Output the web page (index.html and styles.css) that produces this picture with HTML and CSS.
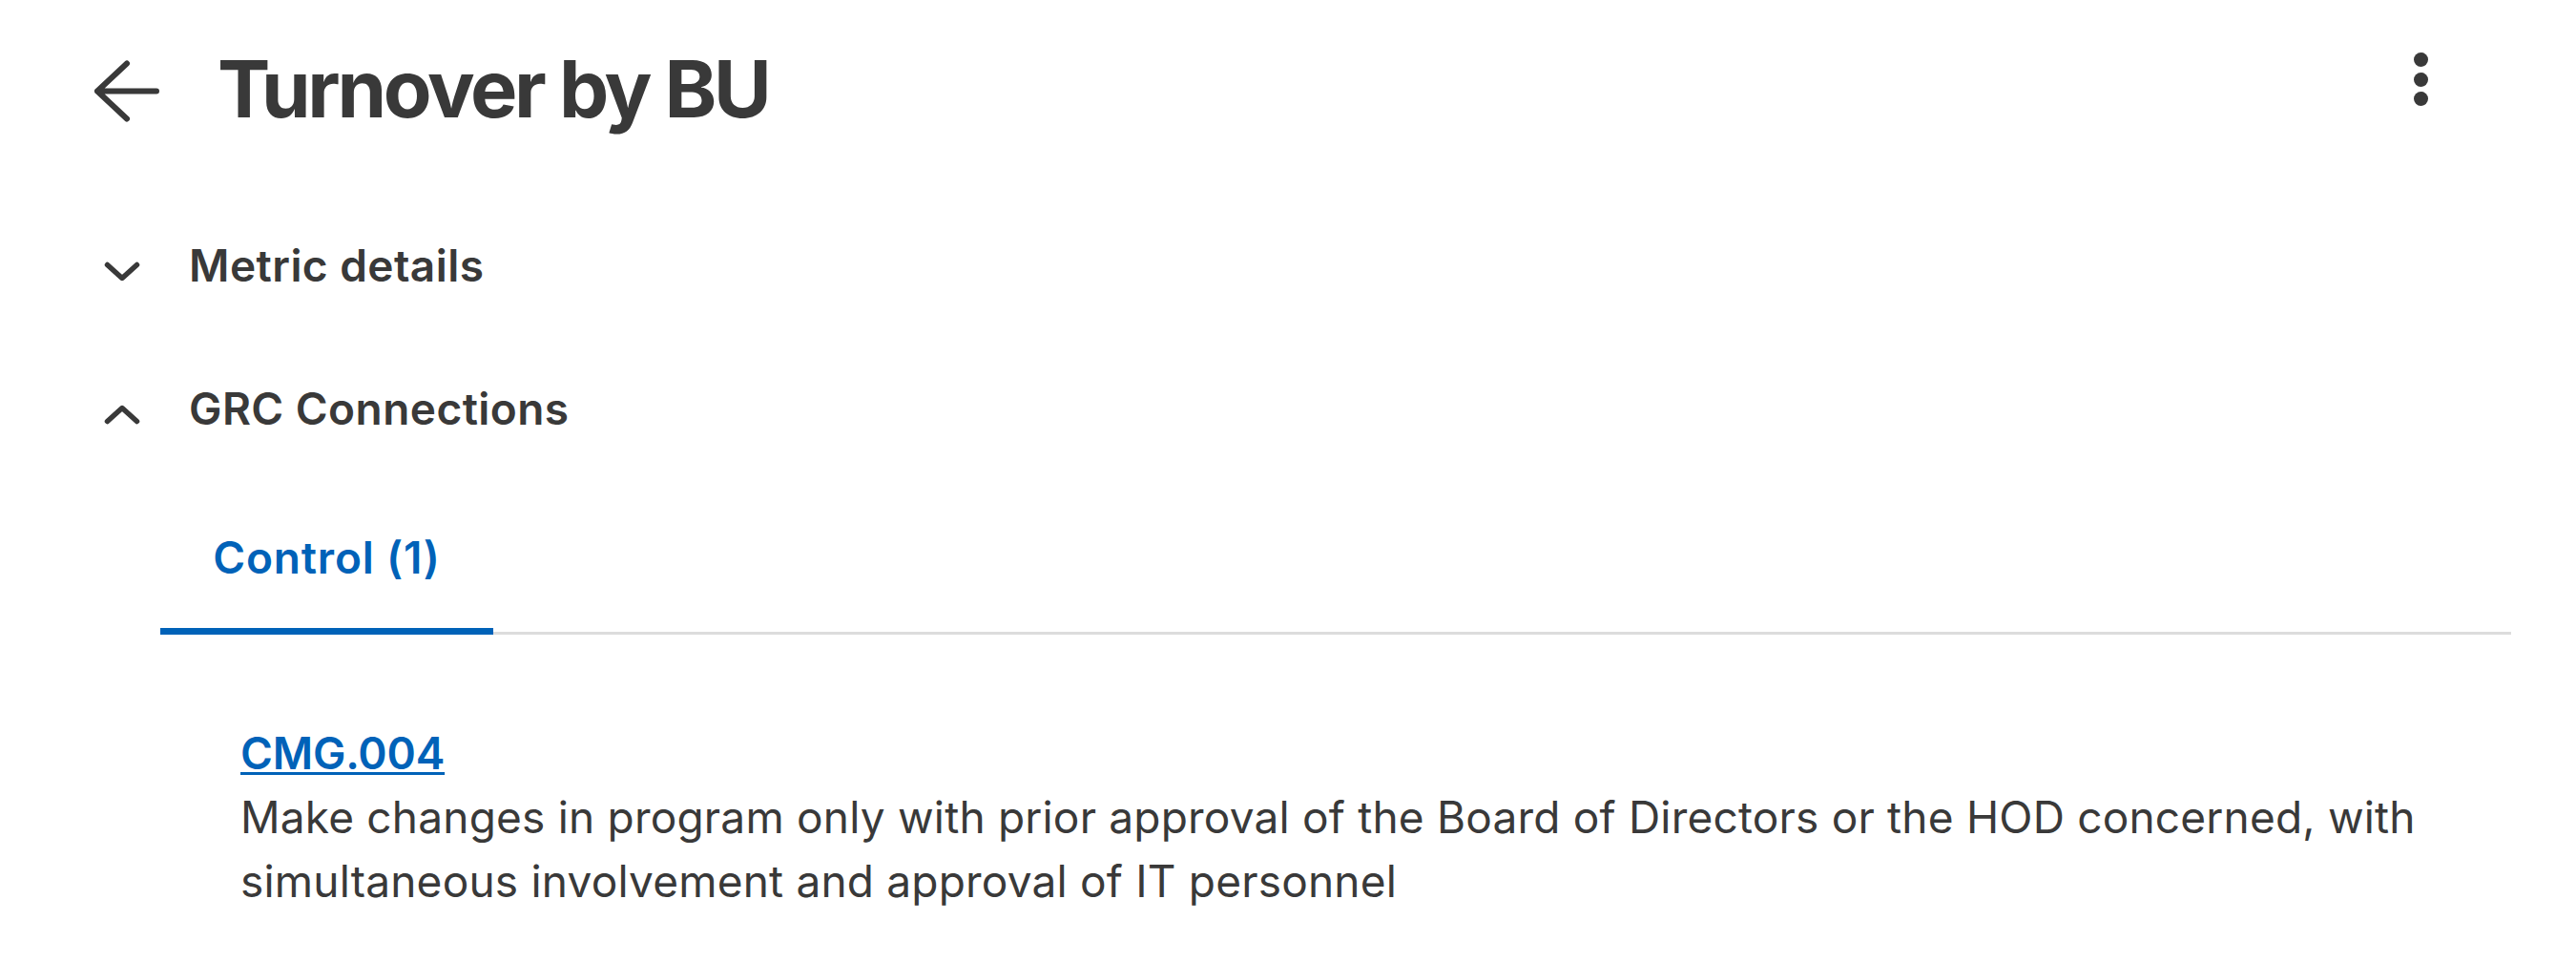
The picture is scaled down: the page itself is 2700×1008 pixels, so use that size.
FILE: index.html
```html
<!DOCTYPE html>
<html lang="en">
<head>
<meta charset="utf-8">
<title>Turnover by BU</title>
<link rel="stylesheet" href="styles.css">
</head>
<body>
<div class="page">
  <header class="header">
    <button class="icon-btn back" aria-label="Back">
      <svg width="69" height="65" viewBox="0 0 69 65" aria-hidden="true">
        <path d="M66 32.5H4M35 3.5L4 32.5L35 61.5" fill="none" stroke="#393939" stroke-width="6" stroke-linecap="round" stroke-linejoin="round"/>
      </svg>
    </button>
    <h1 class="title">Turnover by BU</h1>
    <div class="spacer"></div>
    <button class="kebab" aria-label="More options">
      <span class="dot"></span><span class="dot"></span><span class="dot"></span>
    </button>
  </header>

  <section class="accordion">
    <div class="acc-row">
      <svg class="chev" width="38" height="21" viewBox="0 0 38 21" aria-hidden="true">
        <path d="M3.5 3.5L19 17.5L34.5 3.5" fill="none" stroke="#393939" stroke-width="5.5" stroke-linecap="round" stroke-linejoin="round"/>
      </svg>
      <span class="acc-label">Metric details</span>
    </div>
    <div class="acc-row second">
      <svg class="chev" width="38" height="21" viewBox="0 0 38 21" aria-hidden="true">
        <path d="M3.5 17.5L19 3.5L34.5 17.5" fill="none" stroke="#393939" stroke-width="5.5" stroke-linecap="round" stroke-linejoin="round"/>
      </svg>
      <span class="acc-label">GRC Connections</span>
    </div>
  </section>

  <nav class="tabs">
    <div class="tab active">Control (1)</div>
  </nav>

  <div class="control">
    <a class="control-id" href="#">CMG.004</a>
    <p class="control-desc">Make changes in program only with prior approval of the Board of Directors or the HOD concerned, with simultaneous involvement and approval of IT personnel</p>
  </div>
</div>
</body>
</html>
```

FILE: styles.css
```css
* { box-sizing: border-box; }

html, body {
  margin: 0;
  padding: 0;
  background: #ffffff;
}

body {
  font-family: Inter, Roboto, "Liberation Sans", Arial, sans-serif;
  color: #393939;
}

.page {
  width: 2700px;
}

.header {
  display: flex;
  align-items: flex-start;
  height: 160px;
}

.icon-btn,
.kebab {
  background: none;
  border: 0;
  padding: 0;
  margin: 0;
  cursor: pointer;
}

.back {
  display: block;
  margin-left: 98px;
  margin-top: 63px;
  width: 69px;
  height: 65px;
}

.back svg { display: block; }

.title {
  margin: 43px 0 0 61px;
  font-size: 83px;
  line-height: 100px;
  font-weight: 700;
  letter-spacing: -3.3px;
}

.spacer { flex: 1; }

.kebab {
  display: flex;
  flex-direction: column;
  gap: 5.5px;
  margin-top: 55px;
  margin-right: 155px;
}

.dot {
  display: block;
  width: 15px;
  height: 15px;
  border-radius: 50%;
  background: #393939;
}

.accordion {
  padding-top: 88px;
}

.acc-row {
  display: flex;
  align-items: center;
  height: 60px;
  padding-left: 109px;
}

.acc-row.second {
  margin-top: 90px;
}

.chev {
  display: block;
  margin-top: 12px;
}

.acc-label {
  margin-left: 51px;
  font-size: 46px;
  line-height: 60px;
  font-weight: 600;
  letter-spacing: 0.45px;
}

.tabs {
  display: flex;
  margin: 96px 68px 0 168px;
  border-bottom: 3px solid #dcdcdc;
}

.tab {
  width: 349px;
  text-align: center;
  font-size: 46px;
  line-height: 60px;
  font-weight: 600;
  letter-spacing: 0.8px;
  padding-bottom: 44px;
  color: #0062b8;
}

.tab.active {
  border-bottom: 7px solid #0062b8;
  margin-bottom: -3px;
}

.control {
  margin: 94px 68px 0 252px;
}

.control-id {
  display: block;
  width: max-content;
  font-size: 46px;
  line-height: 60px;
  font-weight: 600;
  letter-spacing: -0.2px;
  color: #0062b8;
  text-decoration: underline;
  text-decoration-thickness: 3px;
  text-underline-offset: 3px;
}

.control-desc {
  margin: 4px 0 0 0;
  font-size: 46px;
  line-height: 67px;
  font-weight: 400;
  letter-spacing: 0.2px;
  color: #393939;
}
```
